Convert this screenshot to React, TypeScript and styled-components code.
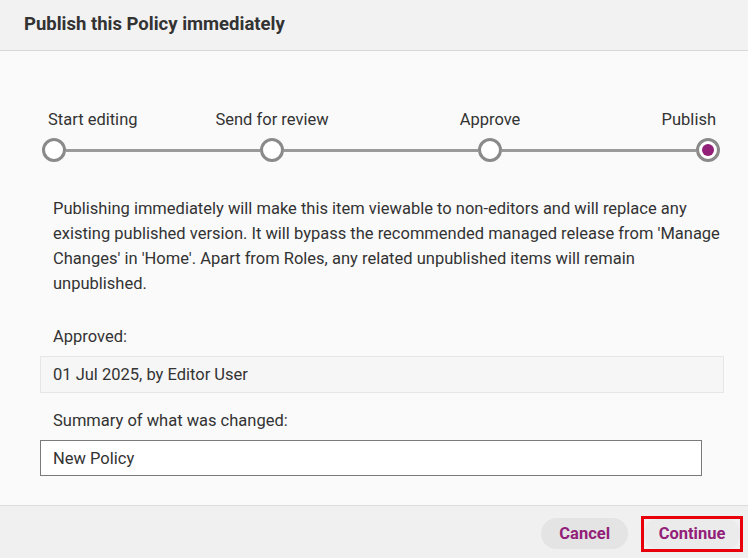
import React, { FC, Fragment } from 'react';
import styled, { createGlobalStyle } from 'styled-components';

const PURPLE = '#921f78';

const steps = ['Start editing', 'Send for review', 'Approve', 'Publish'];

type Align = 'start' | 'center' | 'end';

const alignFor = (i: number, total: number): Align =>
  i === 0 ? 'start' : i === total - 1 ? 'end' : 'center';

const App: FC = () => {
  return (
    <>
      <GlobalStyle />
      <Dialog>
        <Header>
          <Title>Publish this Policy immediately</Title>
        </Header>
        <Body>
          <Stepper>
            {steps.map((s, i) => (
              <Fragment key={s}>
                {i > 0 && <Connector />}
                <Step>
                  <StepLabel align={alignFor(i, steps.length)}>{s}</StepLabel>
                  <Circle active={i === steps.length - 1} />
                </Step>
              </Fragment>
            ))}
          </Stepper>
          <Description>
            Publishing immediately will make this item viewable to non-editors and will replace any
            existing published version. It will bypass the recommended managed release from 'Manage
            Changes' in 'Home'. Apart from Roles, any related unpublished items will remain
            unpublished.
          </Description>
          <FieldLabel>Approved:</FieldLabel>
          <ReadOnlyBox>01 Jul 2025, by Editor User</ReadOnlyBox>
          <FieldLabel spaced>Summary of what was changed:</FieldLabel>
          <TextInput defaultValue="New Policy" />
        </Body>
        <Footer>
          <Button>Cancel</Button>
          <Highlight>
            <Button>Continue</Button>
          </Highlight>
        </Footer>
      </Dialog>
    </>
  );
};

export default App;

//---------------------------STYLES-------------------------------------------//

const GlobalStyle = createGlobalStyle`
  html, body {
    margin: 0;
    padding: 0;
    background: #fafafa;
  }
  * { box-sizing: border-box; }
  body {
    font-family: Roboto, "Liberation Sans", sans-serif;
    color: #333;
  }
`;

const Dialog = styled.div`
  display: flex;
  flex-direction: column;
  width: 748px;
  height: 558px;
  background: #fafafa;
`;

const Header = styled.div`
  height: 51px;
  flex-shrink: 0;
  display: flex;
  align-items: center;
  padding: 0 24px 2px;
  background: #f2f2f2;
  border-bottom: 1px solid #d8d8d8;
`;

const Title = styled.h1`
  margin: 0;
  font-size: 18.5px;
  font-weight: 700;
  color: #333;
`;

const Body = styled.div`
  flex: 1;
  display: flex;
  flex-direction: column;
  padding: 59px 24px 0 40px;
`;

const Stepper = styled.div`
  display: flex;
  align-items: flex-end;
  padding: 0 2px;
  width: 682px;
`;

const Step = styled.div`
  display: flex;
  flex-direction: column;
  align-items: center;
  width: 24px;
  flex-shrink: 0;
`;

const StepLabel = styled.div<{ align: Align }>`
  display: flex;
  width: 24px;
  justify-content: ${p =>
    p.align === 'start' ? 'flex-start' : p.align === 'end' ? 'flex-end' : 'center'};
  padding: ${p => (p.align === 'start' ? '0 0 0 6px' : p.align === 'end' ? '0 4px 0 0' : '0')};
  white-space: nowrap;
  font-size: 16.5px;
  line-height: 20px;
  margin-bottom: 8px;
  color: #333;
`;

const Circle = styled.div<{ active?: boolean }>`
  width: 24px;
  height: 24px;
  border-radius: 50%;
  border: 3px solid #8a8a8a;
  background: #fff;
  display: flex;
  align-items: center;
  justify-content: center;
  &::after {
    content: "";
    display: ${p => (p.active ? 'block' : 'none')};
    width: 12px;
    height: 12px;
    border-radius: 50%;
    background: ${PURPLE};
  }
`;

const Connector = styled.div`
  flex: 1;
  height: 3px;
  margin-bottom: 10.5px;
  background: #9a9a9a;
`;

const Description = styled.p`
  margin: 34px 0 0;
  padding-left: 13px;
  font-size: 16.5px;
  line-height: 25px;
  color: #333;
`;

const FieldLabel = styled.div<{ spaced?: boolean }>`
  margin-top: ${p => (p.spaced ? '15px' : '28px')};
  padding-left: 13px;
  font-size: 16.5px;
  line-height: 25px;
  color: #333;
`;

const ReadOnlyBox = styled.div`
  margin-top: 7px;
  height: 37px;
  display: flex;
  align-items: center;
  padding-left: 12px;
  background: #f6f6f6;
  border: 1px solid #e6e6e6;
  font-size: 16.5px;
  color: #333;
`;

const TextInput = styled.input`
  margin-top: 7px;
  width: 662px;
  height: 36px;
  padding: 0 12px;
  background: #fff;
  border: 1px solid #7a7a7a;
  border-radius: 0;
  font-family: Roboto, "Liberation Sans", sans-serif;
  font-size: 16.5px;
  color: #333;
  outline: none;
`;

const Footer = styled.div`
  height: 53px;
  flex-shrink: 0;
  display: flex;
  align-items: center;
  justify-content: flex-end;
  gap: 13px;
  padding: 3px 5px 0 0;
  background: #f0f0f0;
  border-top: 1px solid #dcdcdc;
`;

const Button = styled.button`
  height: 31px;
  padding: 0 18px;
  border: none;
  border-radius: 16px;
  background: #e4e4e4;
  color: ${PURPLE};
  font-family: Roboto, "Liberation Sans", sans-serif;
  font-size: 16.5px;
  font-weight: 700;
  cursor: pointer;
`;

const Highlight = styled.div`
  display: flex;
  align-items: center;
  justify-content: center;
  width: 102px;
  height: 36px;
  border: 3px solid #e8000b;
  ${Button} {
    width: 96px;
    height: 30px;
    padding: 0;
    background: #ebebeb;
    border-radius: 14px;
  }
`;
